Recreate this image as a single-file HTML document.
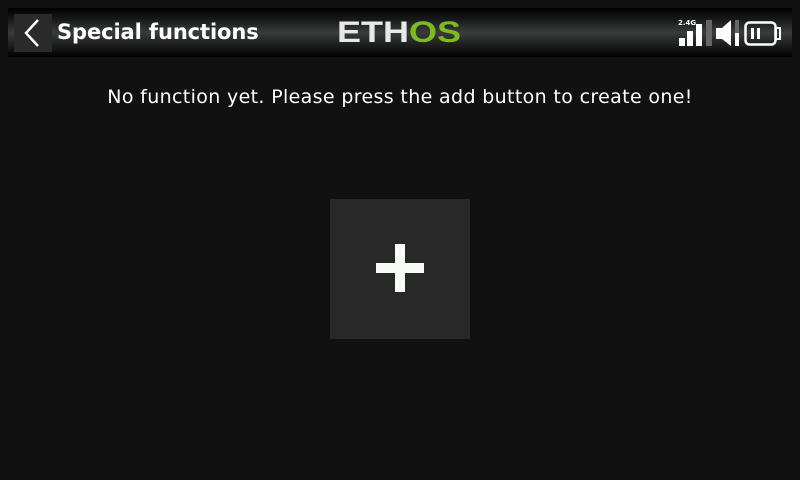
<!DOCTYPE html>
<html><head><meta charset="utf-8"><style>
body{margin:0;width:800px;height:480px;background:#111111;position:relative;overflow:hidden;font-family:"DejaVu Sans","Liberation Sans",sans-serif}
.hdr{position:absolute;left:8px;top:8px;width:784px;height:49px;background:linear-gradient(#000 0%,#1a1b1b 25%,#3a3c3c 50%,#1a1b1b 78%,#000 100%)}
.back{position:absolute;left:14px;top:14px;width:38px;height:38px;background:#2a2a2a}
.title{position:absolute;left:57px;top:20px;color:#fff;font-weight:bold;font-size:21px;letter-spacing:-0.1px}
.logo{position:absolute;left:337px;top:16px;font-family:"Liberation Sans",sans-serif;font-size:30px;font-weight:bold;letter-spacing:0px;color:#e8e8e8;transform:scaleX(1.2);transform-origin:left}
.msg{position:absolute;left:0;width:800px;top:86px;text-align:center;color:#fff;font-size:19px;letter-spacing:0.35px}
.btn{position:absolute;left:330px;top:199px;width:140px;height:140px;background:#282828}
.w{position:absolute;background:#fff}
</style></head><body>
<div class="hdr"></div>
<div class="back"><svg width="38" height="38"><path d="M24 6 L12 19 L24 32" fill="none" stroke="#fff" stroke-width="2.5"/></svg></div>
<div class="title">Special functions</div>
<div class="logo">ETH<span style="color:#7cbc1e">OS</span></div>
<div style="position:absolute;left:678px;top:19px;color:#fff;font-size:7px;font-weight:bold">2.4G</div>
<div class="w" style="left:679px;top:38px;width:6px;height:8px"></div>
<div class="w" style="left:687px;top:31px;width:6px;height:15px"></div>
<div class="w" style="left:696px;top:24px;width:6px;height:22px"></div>
<div style="position:absolute;left:706px;top:20px;width:6px;height:26px;background:#666"></div>
<svg style="position:absolute;left:716px;top:20px" width="26" height="27"><path d="M0 8 H6 L15 0 V26 L6 19 H0 Z" fill="#fff"/><rect x="19" y="0" width="4" height="26" fill="#666"/><rect x="19" y="13" width="4" height="13" fill="#fff"/></svg>
<svg style="position:absolute;left:744px;top:21px" width="38" height="25"><rect x="1.5" y="1.5" width="30" height="22" rx="4" fill="none" stroke="#fff" stroke-width="2.5"/><rect x="32" y="7" width="4" height="11" fill="none" stroke="#fff" stroke-width="2"/><rect x="7" y="7" width="3" height="11" fill="#fff"/><rect x="13" y="7" width="3" height="11" fill="#fff"/></svg>
<div class="msg">No function yet. Please press the add button to create one!</div>
<div class="btn"></div>
<div class="w" style="left:376px;top:263px;width:48px;height:10px;background:#f6fbf6"></div>
<div class="w" style="left:395px;top:244px;width:10px;height:48px;background:#f6fbf6"></div>
</body></html>
